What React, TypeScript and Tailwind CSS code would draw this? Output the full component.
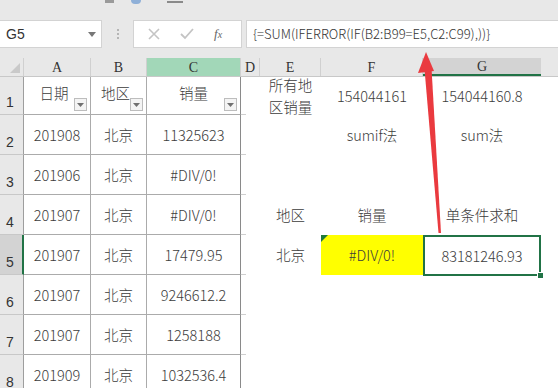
import React from "react";

function Filter() {
  return (
    <div className="absolute right-[3px] bottom-[3px] w-[13px] h-[13px] border border-[#bdbdbd] bg-[#f4f4f4] flex items-center justify-center">
      <svg width="7" height="4" viewBox="0 0 7 4">
        <path d="M0 0 L7 0 L3.5 4 Z" fill="#707070" />
      </svg>
    </div>
  );
}

type Row = {
  h: number;
  n: string;
  a?: React.ReactNode;
  b?: React.ReactNode;
  c?: React.ReactNode;
  e?: React.ReactNode;
  f?: React.ReactNode;
  g?: React.ReactNode;
  filter?: boolean;
  sel?: boolean;
};

const rows: Row[] = [
  { h: 38, n: "1", a: "日期", b: "地区", c: "销量", filter: true,
    e: <div className="leading-[22px] text-left">所有地<br />区销量</div>, f: "154044161", g: "154044160.8" },
  { h: 40, n: "2", a: "201908", b: "北京", c: "11325623", f: "sumif法", g: "sum法" },
  { h: 40, n: "3", a: "201906", b: "北京", c: "#DIV/0!" },
  { h: 40, n: "4", a: "201907", b: "北京", c: "#DIV/0!", e: "地区", f: "销量", g: "单条件求和" },
  { h: 40, n: "5", a: "201907", b: "北京", c: "17479.95", e: "北京", f: "#DIV/0!", g: "83181246.93", sel: true },
  { h: 40, n: "6", a: "201907", b: "北京", c: "9246612.2" },
  { h: 40, n: "7", a: "201907", b: "北京", c: "1258188" },
  { h: 40, n: "8", a: "201909", b: "北京", c: "1032536.4" },
];

export default function App() {
  return (
    <div className="relative w-[558px] h-[388px] overflow-hidden bg-white text-[#3c3c3c] font-light font-['Noto_Sans_CJK_SC','Noto_Sans',sans-serif]">
      {/* top toolbar strip */}
      <div className="h-[20px] bg-[#e8e8e8] flex items-start">
        <div className="ml-[105px] w-[9px] h-[3px] bg-[#9a9a9a]" />
        <div className="ml-[17px] w-[10px] h-[4px] rounded-b-full bg-[#8fb0d8]" />
        <div className="ml-[26px] w-[16px] h-[2px] mt-[1px] bg-[#8a8a8a]" />
      </div>
      {/* formula bar */}
      <div className="h-[38px] bg-[#e8e8e8] flex items-start">
        <div className="w-[102px] h-[28px] bg-white border border-l-0 border-[#d3d3d3] flex items-center justify-between pl-[6px] pr-[5px]">
          <span className="text-[14px] font-normal text-[#333] font-['Liberation_Sans',sans-serif]">G5</span>
          <svg width="8" height="5" viewBox="0 0 8 5"><path d="M0 0 L8 0 L4 5 Z" fill="#777" /></svg>
        </div>
        <div className="w-[31px] h-[28px] flex flex-col items-center justify-center gap-[2px]">
          <div className="w-[2px] h-[2px] bg-[#b5b5b5]" />
          <div className="w-[2px] h-[2px] bg-[#b5b5b5]" />
          <div className="w-[2px] h-[2px] bg-[#b5b5b5]" />
        </div>
        <div className="w-[109px] h-[28px] bg-white border border-[#d3d3d3] flex items-center">
          <svg className="ml-[14px]" width="12" height="12" viewBox="0 0 12 12">
            <path d="M1 1 L11 11 M11 1 L1 11" stroke="#c4c4c4" strokeWidth="1.6" />
          </svg>
          <svg className="ml-[20px]" width="14" height="12" viewBox="0 0 14 12">
            <path d="M1 6 L5 10 L13 1" stroke="#c4c4c4" strokeWidth="1.8" fill="none" />
          </svg>
          <span className="ml-[20px] text-[13px] font-normal italic text-[#666] font-['Liberation_Serif',serif]">f<span className="text-[10px]">x</span></span>
        </div>
        <div className="ml-[4px] flex-1 h-[28px] bg-white border border-r-0 border-[#d3d3d3] flex items-center pl-[6px]">
          <span className="text-[13px] text-[#333] whitespace-nowrap">{"{=SUM(IFERROR(IF(B2:B99=E5,C2:C99),))}"}</span>
        </div>
      </div>
      {/* column headers */}
      <div className="h-[19px] flex bg-[#e8e8e8] border-b border-[#c8c8c8] font-normal font-['Liberation_Serif',serif] text-[14px] text-[#333]">
        <div className="w-[24px] h-full border-r border-[#d0d0d0] relative">
          <svg className="absolute right-[3px] bottom-[3px]" width="10" height="10" viewBox="0 0 10 10">
            <path d="M10 0 L10 10 L0 10 Z" fill="#c9c9c9" />
          </svg>
        </div>
        <div className="w-[67px] h-full border-r border-[#d0d0d0] flex items-center justify-center">A</div>
        <div className="w-[56px] h-full border-r border-[#d0d0d0] flex items-center justify-center">B</div>
        <div className="w-[94px] h-full border-r border-[#d0d0d0] bg-[#a2d7b8] flex items-center justify-center">C</div>
        <div className="w-[19px] h-full border-r border-[#d0d0d0] flex items-center justify-center">D</div>
        <div className="w-[61px] h-full border-r border-[#d0d0d0] flex items-center justify-center">E</div>
        <div className="w-[102px] h-full border-r border-[#d0d0d0] flex items-center justify-center">F</div>
        <div className="w-[118px] h-full bg-[#d3d3d3] border-b-2 border-[#217346] flex items-center justify-center">G</div>
        <div className="flex-1 h-full" />
      </div>
      {/* rows */}
      {rows.map((r) => (
        <div key={r.n} className="flex text-[14.5px]" style={{ height: r.h }}>
          <div
            className={
              r.sel
                ? "w-[24px] h-full bg-[#d3d3d3] border-r-2 border-b border-r-[#217346] border-b-[#c8c8c8] flex items-end pl-[6px] pb-[1px] text-[14px] font-normal text-[#333] font-['Liberation_Sans',sans-serif]"
                : "w-[24px] h-full bg-[#e8e8e8] border-r border-b border-r-[#9e9e9e] border-b-[#c8c8c8] flex items-end pl-[6px] pb-[1px] text-[14px] font-normal text-[#333] font-['Liberation_Sans',sans-serif]"
            }
          >
            {r.n}
          </div>
          <div className="relative w-[67px] h-full border-r border-b border-[#ababab] flex items-center justify-center">
            <span className={r.filter ? "-mt-[6px] -ml-[6px]" : ""}>{r.a}</span>
            {r.filter && <Filter />}
          </div>
          <div className="relative w-[56px] h-full border-r border-b border-[#ababab] flex items-center justify-center">
            <span className={r.filter ? "-mt-[6px] -ml-[6px]" : ""}>{r.b}</span>
            {r.filter && <Filter />}
          </div>
          <div className="relative w-[94px] h-full border-r border-b border-[#ababab] border-r-[#8a8a8a] flex items-center justify-center">
            <span className={r.filter ? "-mt-[6px]" : ""}>{r.c}</span>
            {r.filter && <Filter />}
          </div>
          <div className="w-[19px] h-full flex flex-col justify-end">
            <div className="w-[5px] border-b border-[#cfcfcf]" />
          </div>
          <div className="w-[61px] h-full flex items-center justify-center">{r.e}</div>
          <div
            className={
              r.sel
                ? "relative w-[102px] h-full bg-[#ffff00] flex items-center justify-center"
                : "w-[102px] h-full flex items-center justify-center"
            }
          >
            {r.sel && (
              <svg className="absolute left-0 top-0" width="7" height="7" viewBox="0 0 7 7">
                <path d="M0 0 L7 0 L0 7 Z" fill="#1f7a3b" />
              </svg>
            )}
            {r.f}
          </div>
          <div
            className={
              r.sel
                ? "relative w-[118px] h-[41px] border-2 border-[#217346] flex items-center justify-center z-10"
                : "w-[118px] h-full flex items-center justify-center"
            }
          >
            {r.g}
            {r.sel && (
              <div className="absolute -right-[5px] -bottom-[5px] w-[7px] h-[7px] bg-[#217346] border border-white" />
            )}
          </div>
          <div className="flex-1 h-full" />
        </div>
      ))}
      {/* red arrow annotation */}
      <svg className="absolute left-0 top-0 pointer-events-none z-20" width="558" height="388" viewBox="0 0 558 388">
        <polygon points="438.5,233 441,233 431.5,68 424.5,69" fill="#ea3a3f" />
        <polygon points="426,52 418,73 434,71" fill="#ea3a3f" />
      </svg>
    </div>
  );
}
